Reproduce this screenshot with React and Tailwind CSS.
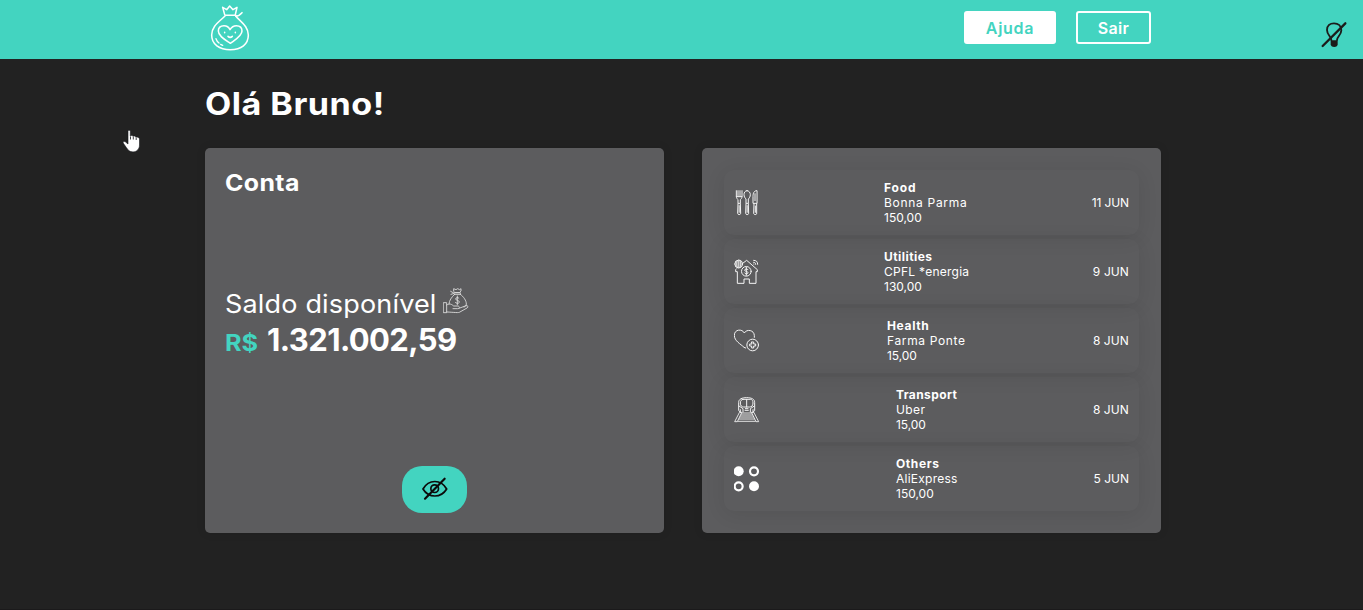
function Logo() {
  return (
    <svg className="h-[46px] w-[40px]" viewBox="30 17 120 138" fill="none" stroke="#fff" strokeWidth="4.6" strokeLinecap="round" strokeLinejoin="round">
      <path d="M74 46 L68 24 L80 31 L89 20 L99 31 L111 24 L106 46" />
      <path d="M76 48 H107 M107 50 C114 50 121 46 126 40" />
      <path d="M75 50 C58 67 35 80 35 107 C35 135 58 151 91 151 C124 151 145 135 145 107 C145 80 121 67 107 50" />
      <path d="M91 132 C75 121 55 110 55 95 C55 84 63 79 72 79 C82 79 87 84 90 91 C94 84 99 79 109 79 C119 79 126 85 126 95 C126 110 106 121 91 132 Z" />
      <path d="M74 99 v1 M106 99 v1 M84 111 C88 115 93 115 97 111" />
      <path d="M48 118 C50 124 53 128 57 131 M62 135 L68 138" strokeWidth="4" />
    </svg>
  );
}

function BulbOff() {
  return (
    <svg className="h-[27px] w-[26px]" viewBox="61 47 78 81" fill="none" stroke="#1c1c1a" strokeWidth="5.5" strokeLinecap="round" strokeLinejoin="round">
      <path d="M92 104 C92 94 79 89 79 74 C79 61 88 54 100 54 C113 54 122 62 122 75 C122 89 109 94 109 104" />
      <path d="M90 105 H111 V117 C111 122 107 125 101 125 C94 125 90 122 90 117 Z" fill="#1c1c1a" stroke="none" />
      <path d="M66 122 L134 54" strokeWidth="7" />
    </svg>
  );
}

function HandCursor() {
  return (
    <svg className="pointer-events-none absolute left-[122px] top-[129px] h-[25px] w-[19px]" viewBox="0 0 19 25">
      <path
        d="M6 2.2 C6 1 8.300 1 8.300 2.200 V7 C8.800 6.200 10.900 6.400 11 7.400 C11.700 6.700 13.600 7 13.800 8.200 C14.800 7.600 17.500 8.200 17.500 10 V16 C17.500 20 14.800 22.900 11 22.900 C7.500 22.900 6 21 4.500 18.800 L1.200 14 C0.700 12.800 2.200 12.100 3.300 12.800 L6 15 Z"
        fill="#fff"
        stroke="#15171c"
        strokeWidth="0.600"
      />
      <path d="M8.500 7.500 V10.500 M11.300 7.800 V10.500 M14.200 8.600 V11" stroke="#15171c" strokeWidth="0.800" />
    </svg>
  );
}

function MoneyHand() {
  return (
    <svg className="h-[26px] w-[26px] shrink-0" viewBox="698 38 78 78" fill="none" stroke="#dedede" strokeWidth="2.600" strokeLinecap="round" strokeLinejoin="round">
      <path d="M730 47 V40 L737 43 L742 40 L748 43 L752 40 V47 L747 52 H735 Z M733 52 H750 V57 H732 M721 48 L732 54 L722 57" />
      <path d="M733 57 C724 65 716 76 716 86 M750 57 C760 64 768 76 768 86 C768 91 765 94 761 95" />
      <path d="M746 69 C744 65 736 66 736 71 C736 76 747 74 747 80 C747 85 738 86 735 81 M741 62 V88" />
      <path d="M700 82 H709 V112 H700 Z M709 89 C718 83 724 87 730 92 H743 C749 93 748 100 742 100 H728 M746 99 L767 91 C773 90 775 95 770 98 L747 111 C743 113 720 110 709 110" />
    </svg>
  );
}

function EyeOff() {
  return (
    <svg className="mb-[2px] h-[24px] w-[26px]" viewBox="95 65 78 72" fill="none" stroke="#0b0b0b" strokeWidth="5.200" strokeLinecap="round" strokeLinejoin="round">
      <path d="M98 101 C115 71 152 71 169 101 C152 129 115 129 98 101 Z" />
      <circle cx="133" cy="100" r="11.500" strokeWidth="5" />
      <path d="M104 130 L163 70" strokeWidth="6.500" />
    </svg>
  );
}

const iconProps = {
  className: "h-[26px] w-[26px] shrink-0",
  fill: "none",
  stroke: "#f4f4f4",
  strokeWidth: 3,
  strokeLinecap: "round",
  strokeLinejoin: "round",
};

function FoodIcon() {
  return (
    <svg {...iconProps} viewBox="117 149 78 78">
      <path d="M124 151 V168 C124 174 128 177 129 178 V189 H136 V178 C138 176 141 174 141 168 V151 M129 151 V168 M135 151 V168 M124 169 H141" />
      <path d="M129 190 L128 219 C128 224 137 224 137 219 L136 190 M132.500 196 V216" />
      <path d="M156 151 C150 151 147 157 147 163 C147 169 150 173 153 176 V189 H160 V176 C163 173 166 169 166 163 C166 157 162 151 156 151 Z" />
      <path d="M153 190 L152 219 C152 224 161 224 161 219 L160 190 M156.500 196 V216" />
      <path d="M185 151 C177 151 174 158 174 169 V189 H185 Z M180 160 V181 M177 190 L176 219 C176 224 186 224 185 219 V190 M181 197 V216" />
    </svg>
  );
}

function UtilitiesIcon() {
  return (
    <svg {...iconProps} viewBox="117 357 78 78">
      <circle cx="131" cy="372" r="11.500" />
      <path d="M119 372 H143 M131 360 V384 M122 366 H140 M122 378 H140 M127 361 C124 368 124 376 127 383 M135 361 C138 368 138 376 135 383" strokeWidth="2.200" />
      <path d="M143 370 L155 361 L187 389 V395 H183 V430 H163 V417 H147 V430 H127 V395 H122 V389 L125 386" />
      <circle cx="154" cy="394" r="14.500" />
      <path d="M159 389 C157 385 149 386 149 391 C149 395 159 393 159 398 C159 403 151 403 149 399 M154 382 V406" />
      <path d="M176 361 C184 361 188 365 188 373 M176 367 C180 367 182 369 182 373 M176.500 372 v.5" />
    </svg>
  );
}

function HealthIcon() {
  return (
    <svg {...iconProps} viewBox="117 68 78 78">
      <path d="M152 128 L147 126 C137 116 118 107 118 90 C118 71 142 70 148 83 C155 70 178 74 178 91 V96" />
      <circle cx="173" cy="119" r="17.500" />
      <path d="M170 110 H176 V116 H182 V122 H176 V128 H170 V122 H164 V116 H170 Z" />
    </svg>
  );
}

function TransportIcon() {
  return (
    <svg {...iconProps} viewBox="117 275 78 78">
      <path d="M136 321 L131 315 V291 C131 281 141 277 155 277 C169 277 179 281 179 291 V315 L174 321" />
      <path d="M144 282 H166 C172 282 174 287 174 293 C174 302 169 305 164 305 H146 C140 305 136 301 136 293 C136 287 139 282 144 282 Z M155 282 V305" />
      <path d="M132 302 L144 310 V320 M178 302 L166 310 V320 M151 310 H159 M150 315 H160 M136 313 V320 M174 313 V320" />
      <path d="M133 322 L119 349 H127 L140 322 Z M177 322 L191 349 H183 L170 322 Z M140 323 H170 M138 329 H172 M135 335 H175 M132 341 H178 M129 348 H181" strokeWidth="2.600" />
    </svg>
  );
}

function OthersIcon() {
  return (
    <svg className="h-[26px] w-[26px] shrink-0" viewBox="117 482 78 78" fill="none" stroke="#fff" strokeWidth="6.500">
      <circle cx="131" cy="498" r="15" fill="#fff" stroke="none" />
      <circle cx="177" cy="498" r="12" />
      <circle cx="131" cy="543" r="12" />
      <circle cx="177" cy="543" r="15" fill="#fff" stroke="none" />
    </svg>
  );
}

const transactions = [
  { Icon: FoodIcon, category: "Food", place: "Bonna Parma", value: "150,00", date: "11 JUN", offset: "ml-[124px]", ls: ["tracking-[0.9px]", "tracking-[0.7px]", "tracking-normal", "tracking-[-0.1px]"] },
  { Icon: UtilitiesIcon, category: "Utilities", place: "CPFL *energia", value: "130,00", date: "9 JUN", offset: "ml-[124px]", ls: ["tracking-[0.45px]", "tracking-[0.25px]", "tracking-normal", "tracking-[0.1px]"] },
  { Icon: HealthIcon, category: "Health", place: "Farma Ponte", value: "15,00", date: "8 JUN", offset: "ml-[127px]", ls: ["tracking-[0.65px]", "tracking-[0.65px]", "tracking-[-0.1px]", "tracking-[0.1px]"] },
  { Icon: TransportIcon, category: "Transport", place: "Uber", value: "15,00", date: "8 JUN", offset: "ml-[136px]", ls: ["tracking-[0.4px]", "tracking-[0.4px]", "tracking-[-0.1px]", "tracking-[0.1px]"] },
  { Icon: OthersIcon, category: "Others", place: "AliExpress", value: "150,00", date: "5 JUN", offset: "ml-[136px]", ls: ["tracking-[0.6px]", "tracking-[0.25px]", "tracking-normal", "tracking-normal"] },
];

function Transaction({ Icon, category, place, value, date, offset, ls }) {
  return (
    <li className="flex h-[65px] items-center rounded-[10px] px-[10px] text-[12px] leading-[15px] shadow-[0_3px_20px_rgba(0,0,0,0.09)]">
      <Icon />
      <div className={`whitespace-nowrap ${offset}`}>
        <p className={`font-bold ${ls[0]}`}>{category}</p>
        <p className={ls[1]}>{place}</p>
        <p className={ls[2]}>{value}</p>
      </div>
      <span className={`ml-auto whitespace-nowrap ${ls[3]}`}>{date}</span>
    </li>
  );
}

export default function App() {
  return (
    <div className="relative h-[610px] overflow-hidden border-b border-[#1b1a1b] bg-[#222222] font-['Inter','Open_Sans',sans-serif] text-white">
      <header className="flex h-[59px] bg-[#43d4c0] pl-[210px] pr-4">
        <div className="pt-[5px]">
          <Logo />
        </div>
        <nav className="ml-auto flex gap-5 pt-[11px] text-[16px] font-semibold">
          <button className="h-[33px] w-[92px] rounded-[3px] bg-white tracking-[0.7px] text-[#43d4c0]">Ajuda</button>
          <button className="h-[33px] w-[75px] rounded-[3px] border-2 border-white tracking-[0.4px]">Sair</button>
        </nav>
        <button className="ml-[170px] self-start pt-[21px]" aria-label="Tema">
          <BulbOff />
        </button>
      </header>

      <main className="pl-[205px]">
        <h1 className="w-max origin-left scale-x-[1.1] pt-[25px] text-[31px] font-bold leading-[40px] tracking-[0.45px]">Olá Bruno!</h1>
        <div className="mt-6 flex gap-[38px]">
          <section className="flex h-[385px] w-[459px] flex-col rounded-[5px] bg-[#5c5c5e] px-5 pb-5 pt-[20px] shadow-[0_0_10px_rgba(0,0,0,0.1)]">
            <h2 className="w-max origin-left scale-x-[1.08] text-[23px] font-bold leading-[30px] tracking-[0.4px]">Conta</h2>
            <div className="mt-[87px]">
              <div className="flex h-9">
                <p className="w-[218px] whitespace-nowrap text-[25.5px] leading-[38px]">
                  <span className="inline-block origin-left scale-x-[1.06] tracking-[0.15px]">Saldo disponível</span>
                </p>
                <div className="pt-[3px]">
                  <MoneyHand />
                </div>
              </div>
              <p className="flex items-baseline whitespace-nowrap font-bold leading-[38px]">
                <span className="w-[42px] text-[23px] text-[#43d4c0]">
                  <span className="inline-block origin-left scale-x-[1.1]">R$</span>
                </span>
                <span className="text-[31px] tracking-[-0.6px]">1.321.002,59</span>
              </p>
            </div>
            <button className="mt-auto flex h-[47px] w-[65px] items-center justify-center self-center rounded-[20px] bg-[#43d4c0]" aria-label="Ocultar saldo">
              <EyeOff />
            </button>
          </section>

          <section className="h-[385px] w-[459px] rounded-[5px] bg-[#5c5c5e] px-[22px] pt-[22px] shadow-[0_0_10px_rgba(0,0,0,0.1)]">
            <ul className="flex flex-col gap-1">
              {transactions.map((t) => (
                <Transaction key={t.category} {...t} />
              ))}
            </ul>
          </section>
        </div>
      </main>
      <HandCursor />
    </div>
  );
}
